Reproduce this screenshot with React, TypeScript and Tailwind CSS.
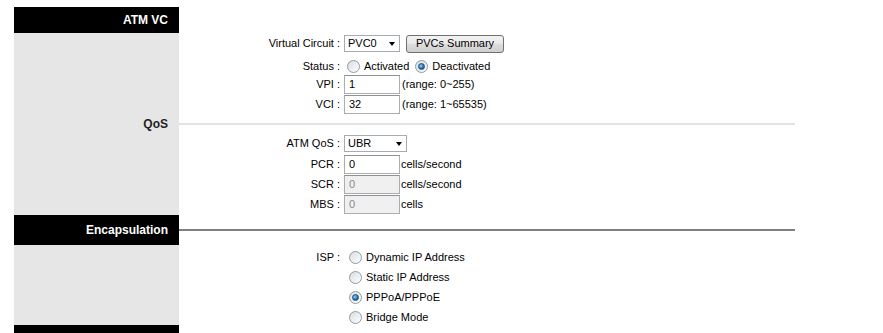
import type { ReactNode } from "react";

function Radio({ checked = false }: { checked?: boolean }) {
  return (
    <span className="relative inline-flex h-[13px] w-[13px] shrink-0 items-center justify-center rounded-full border border-[#8f9aa5] bg-[linear-gradient(135deg,#d9dcdf,#ffffff)]">
      {checked ? (
        <span className="h-[7px] w-[7px] rounded-full border border-[#1e4e78] bg-[radial-gradient(circle_at_35%_35%,#8fd0f5,#2a6fb0_60%,#123e66)]" />
      ) : null}
    </span>
  );
}

function Select({ value, w }: { value: string; w: string }) {
  return (
    <div
      className={`flex h-[17px] items-center justify-between border border-[#a5acb5] bg-white pl-[3px] pr-[3px] ${w}`}
    >
      <span>{value}</span>
      <span className="mr-[1px] h-0 w-0 border-x-[3.5px] border-t-[4px] border-x-transparent border-t-black" />
    </div>
  );
}

function Input({ value, disabled = false }: { value: string; disabled?: boolean }) {
  return (
    <div
      className={`flex h-[19px] w-[56px] items-center border border-[#abadb3] border-t-[#8e9196] pl-[4px] ${
        disabled ? "bg-[#f0f0f0] text-[#8a8a8a]" : "bg-white"
      }`}
    >
      {value}
    </div>
  );
}

function Row({ label, children, h = "h-[20px]" }: { label?: string; children?: ReactNode; h?: string }) {
  return (
    <div className={`flex items-center ${h}`}>
      <div className="w-[161px] text-right">{label ? `${label} :` : ""}</div>
      <div className="ml-[4px] flex items-center">{children}</div>
    </div>
  );
}

function Option({ label, checked = false }: { label: string; checked?: boolean }) {
  return (
    <span className="ml-[5px] flex items-center">
      <Radio checked={checked} />
      <span className="ml-[4px]">{label}</span>
    </span>
  );
}

export default function App() {
  return (
    <div className="min-h-[333px] bg-white pl-[14px] pt-[7px] font-['Liberation_Sans',Arial,sans-serif] text-[11px] leading-none text-black">
      <div className="grid w-[781px] grid-cols-[165px_616px]">
        {/* ATM VC */}
        <div className="flex h-[26px] items-center justify-end bg-black pr-[11px] text-[12px] font-bold text-white">
          ATM VC
        </div>
        <div />
        <div className="bg-[#e6e6e6]" />
        <div className="flex flex-col pt-[1px]">
          <Row label="Virtual Circuit" h="h-[19px]">
            <Select value="PVC0" w="w-[56px]" />
            <div className="ml-[6px] flex h-[18px] w-[98px] items-center justify-center rounded-[3px] border border-[#707070] bg-[linear-gradient(#f2f2f2,#ebebeb_45%,#dddddd_50%,#cfcfcf)]">
              PVCs Summary
            </div>
          </Row>
          <Row label="Status" h="h-[21px] pt-[6px]">
            <span className="ml-[3px] flex items-center">
              <Radio />
              <span className="ml-[4px]">Activated</span>
              <span className="ml-[6px]">
                <Radio checked />
              </span>
              <span className="ml-[4px]">Deactivated</span>
            </span>
          </Row>
          <Row label="VPI">
            <Input value="1" />
            <span className="ml-[2px]">(range: 0~255)</span>
          </Row>
          <Row label="VCI">
            <Input value="32" />
            <span className="ml-[2px]">(range: 1~65535)</span>
          </Row>
        </div>

        {/* QoS */}
        <div className="flex h-[19px] items-center justify-end bg-[#e6e6e6] pr-[11px] text-[12px] font-bold text-[#222]">
          QoS
        </div>
        <div className="flex items-center">
          <div className="h-[2px] w-full bg-[#e3e3e3]" />
        </div>
        <div className="bg-[#e6e6e6]" />
        <div className="flex flex-col">
          <Row label="ATM QoS" h="h-[21px]">
            <Select value="UBR" w="w-[63px]" />
          </Row>
          <Row label="PCR">
            <Input value="0" />
            <span className="ml-[1px]">cells/second</span>
          </Row>
          <Row label="SCR">
            <Input value="0" disabled />
            <span className="ml-[1px]">cells/second</span>
          </Row>
          <Row label="MBS">
            <Input value="0" disabled />
            <span className="ml-[1px]">cells</span>
          </Row>
          <div className="h-[1px]" />
        </div>

        {/* Encapsulation */}
        <div className="flex h-[30px] items-center justify-end bg-black pr-[11px] text-[12px] font-bold text-white">
          Encapsulation
        </div>
        <div className="flex items-center">
          <div className="h-[2px] w-full bg-[#808080]" />
        </div>
        <div className="flex flex-col">
          <div className="h-[80px] bg-[#e6e6e6]" />
          <div className="flex-1 bg-black" />
        </div>
        <div className="flex flex-col pt-[2px]">
          <Row label="ISP">
            <Option label="Dynamic IP Address" />
          </Row>
          <Row>
            <Option label="Static IP Address" />
          </Row>
          <Row>
            <Option label="PPPoA/PPPoE" checked />
          </Row>
          <Row>
            <Option label="Bridge Mode" />
          </Row>
        </div>
        <div className="h-[26px] bg-black" />
        <div />
      </div>
    </div>
  );
}
